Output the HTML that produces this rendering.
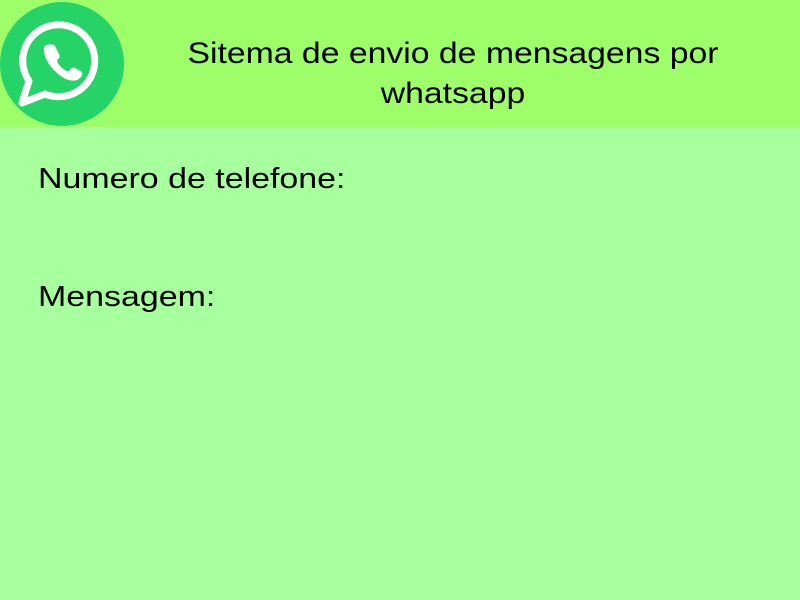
<!DOCTYPE html>
<html><head><style>
body{margin:0;width:800px;height:600px;background:#a8ff9e;font-family:"Liberation Sans",sans-serif;overflow:hidden;position:relative}
.h{position:absolute;left:0;top:0;width:800px;height:127px;background:#9efe6a}
.t{position:absolute;left:150px;width:606px;text-align:center;top:34px;font-size:30px;line-height:40px;color:#000;transform:scaleX(1.125);transform-origin:303px 0}
.l{position:absolute;left:38px;font-size:29px;color:#000;transform:scaleX(1.17);transform-origin:0 0}
</style></head><body>
<div class="h"></div>
<svg style="position:absolute;left:0;top:0" width="130" height="130" viewBox="0 0 130 130">
<circle cx="62" cy="64" r="62" fill="#26d367"/>
<path d="M29 81 A36 36 0 1 1 45 94 L22 103 Z" fill="none" stroke="#fff" stroke-width="7" stroke-linejoin="round"/>
<path d="M44 47 C43 55 48 65 56 72 C63 79 71 82 77 80 C81 78 83 75 82 72 L75 68 C73 67 71 68 70 70 C68 72 66 71 62 68 C58 64 56 61 58 59 C60 58 60 56 59 54 L55 46 C53 44 50 44 47 45 Z" fill="#fff"/>
</svg>
<div class="t">Sitema de envio de mensagens por<br>whatsapp</div>
<div class="l" style="top:163px">Numero de telefone:</div>
<div class="l" style="top:281px">Mensagem:</div>
</body></html>
